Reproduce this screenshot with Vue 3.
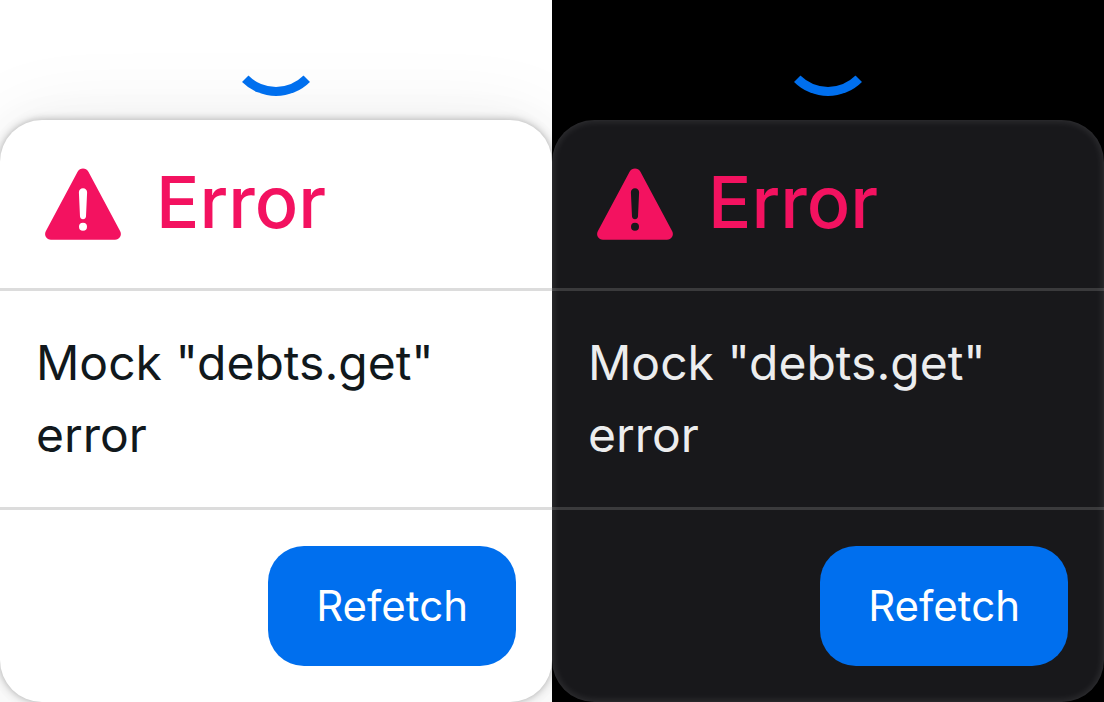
<script setup>
const themes = ['light', 'dark']
</script>

<template>
  <main class="themes">
    <section v-for="theme in themes" :key="theme" class="pane" :class="theme">
      <div class="spinner" role="status" aria-label="Loading"></div>
      <article class="card">
        <header class="card-header">
          <svg class="icon" viewBox="0 0 96 96" aria-hidden="true">
            <path
              fill="currentColor"
              fill-rule="evenodd"
              d="M41.6 15.8C44 11.4 50 11.4 52.4 15.8L84.2 75.2C86.3 79.2 83.4 83.7 79 83.7H15C10.6 83.7 7.7 79.2 9.8 75.2ZM47 32.2C44.6 32.2 42.8 34.1 42.9 36.5L44 60.4C44.1 62 45.4 63.2 47 63.2C48.6 63.2 49.9 62 50 60.4L51.1 36.5C51.2 34.1 49.4 32.2 47 32.2ZM47 66.7A4 4 0 1 0 47 74.7A4 4 0 1 0 47 66.7Z"
            />
          </svg>
          <h1 class="title">Error</h1>
        </header>
        <hr class="divider" />
        <p class="message">Mock "debts.get" error</p>
        <hr class="divider" />
        <footer class="card-footer">
          <button type="button" class="button">Refetch</button>
        </footer>
      </article>
    </section>
  </main>
</template>

<style>
body {
  margin: 0;
  background: #fff;
}
</style>

<style scoped>
.themes {
  display: grid;
  grid-template-columns: 1fr 1fr;
  font-family: Inter, "Liberation Sans", sans-serif;
}

.pane {
  display: flex;
  flex-direction: column;
  gap: 24px;
  overflow: hidden;
}

.light {
  background: #fff;
  color: #11181c;
  --card: #fff;
  --line: rgba(17, 17, 17, 0.15);
  --shadow: 0 0 45px rgba(0, 0, 0, 0.03), 0 6px 90px rgba(0, 0, 0, 0.08),
    0 0 9px rgba(0, 0, 0, 0.3);
}

.dark {
  background: #000;
  color: #ecedee;
  --card: #18181b;
  --line: rgba(255, 255, 255, 0.15);
  --shadow: inset 0 0 9px rgba(255, 255, 255, 0.15);
}

.spinner {
  box-sizing: border-box;
  width: 96px;
  height: 96px;
  align-self: center;
  border: 9px solid transparent;
  border-bottom-color: #006fee;
  border-radius: 50%;
  position: relative;
  z-index: 1;
}

.card {
  border-radius: 42px;
  background: var(--card);
  box-shadow: var(--shadow);
}

.card-header {
  display: flex;
  align-items: flex-start;
  gap: 24px;
  padding: 36px;
  color: #f31260;
}

.icon {
  width: 96px;
  height: 96px;
  flex: none;
}

.title {
  margin: 0;
  font-size: 72px;
  line-height: 92px;
  font-weight: 500;
}

.divider {
  height: 3px;
  margin: 0;
  border: 0;
  background: var(--line);
}

.message {
  margin: 0;
  padding: 36px;
  font-size: 48px;
  line-height: 72px;
}

.card-footer {
  display: flex;
  justify-content: flex-end;
  padding: 36px;
}

.button {
  height: 120px;
  padding: 0 48px;
  border: 0;
  border-radius: 36px;
  background: #006fee;
  color: #fff;
  font: inherit;
  font-size: 42px;
  line-height: 60px;
}
</style>
